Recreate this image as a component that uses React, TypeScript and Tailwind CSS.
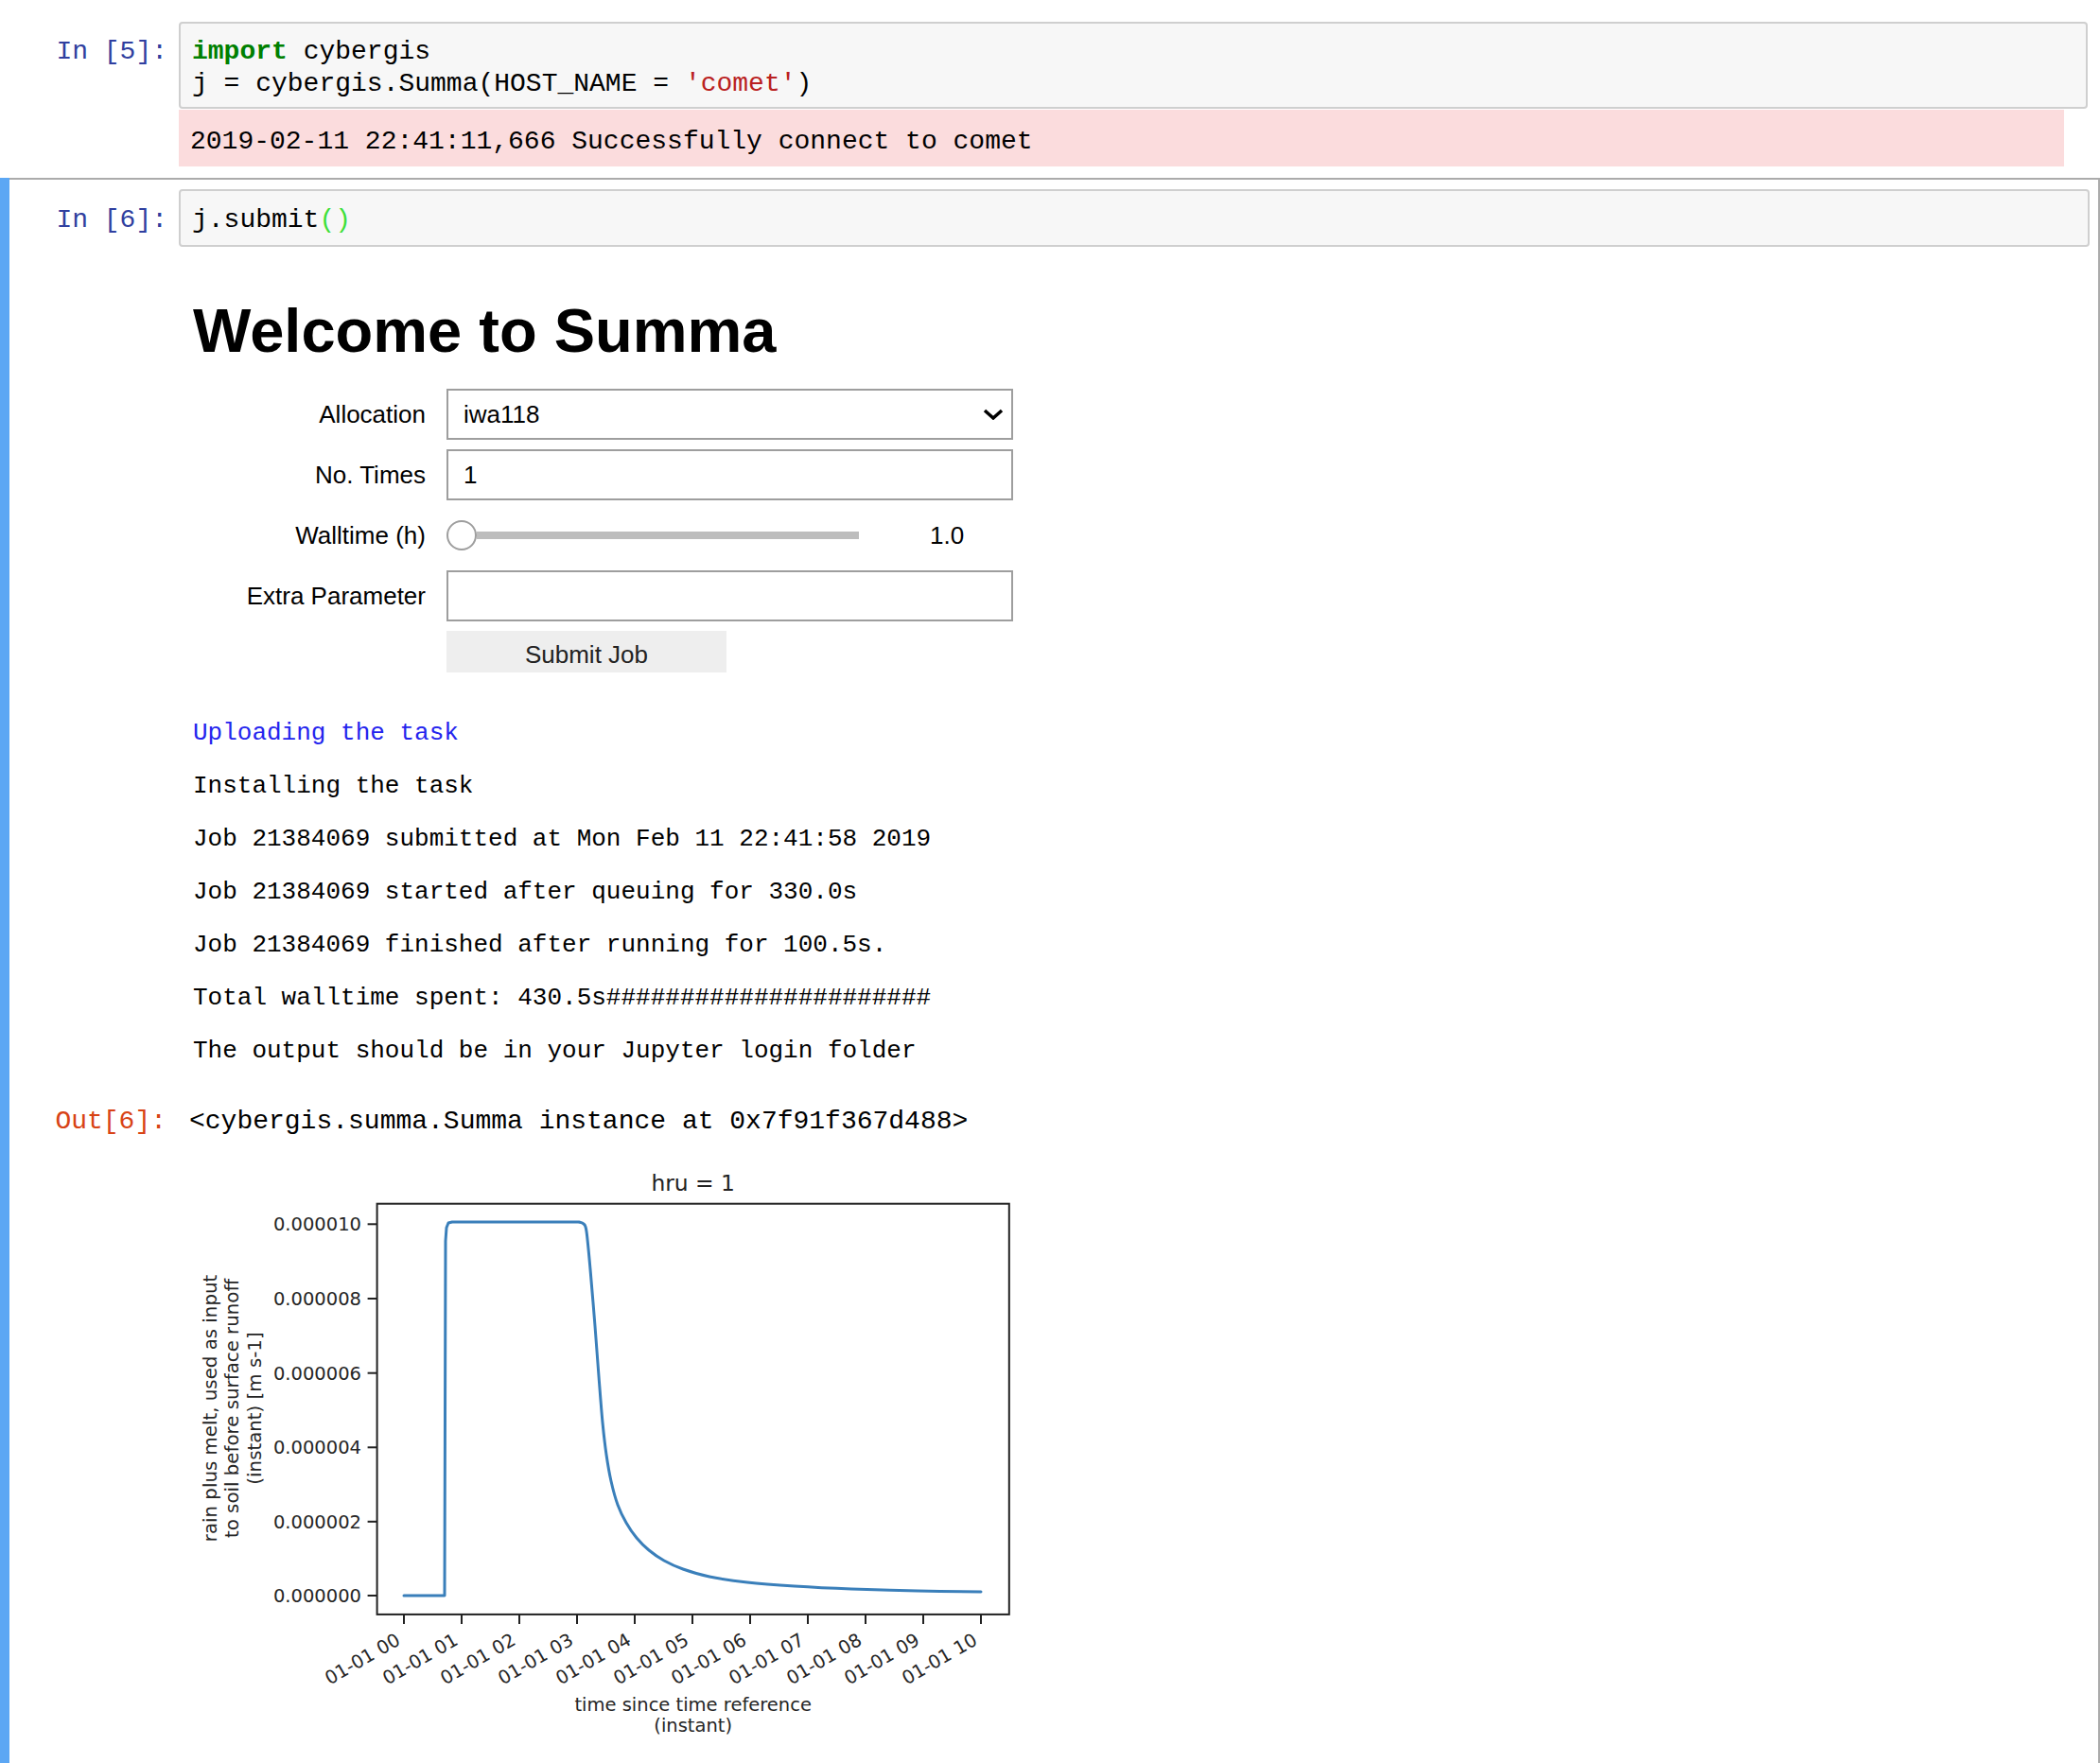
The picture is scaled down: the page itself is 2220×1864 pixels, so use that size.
const mono = "font-['Liberation_Mono',monospace]";
const sans = "font-['Liberation_Sans',Arial,sans-serif]";

const logLines = [
  { text: "Uploading the task", blue: true },
  { text: "Installing the task" },
  { text: "Job 21384069 submitted at Mon Feb 11 22:41:58 2019" },
  { text: "Job 21384069 started after queuing for 330.0s" },
  { text: "Job 21384069 finished after running for 100.5s." },
  { text: "Total walltime spent: 430.5s######################" },
  { text: "The output should be in your Jupyter login folder" },
];

// plot data, in svg-local pixels
const step: [number, number][] = [
  [227, 485], [270, 485], [271, 110], [272, 96], [274, 91], [278, 90], [412, 90],
];
const decay: [number, number][] = [
  [412, 90], [417, 92], [420, 100], [424, 140], [429, 200], [433, 253], [437, 302],
  [441, 336], [446, 364], [453, 389], [462, 408], [473, 424], [486, 437], [502, 448],
  [522, 457], [550, 465], [590, 471], [640, 475], [700, 478], [770, 480], [837, 481],
];

function smooth(pts: [number, number][]) {
  let d = "";
  for (let i = 0; i < pts.length - 1; i++) {
    const p0 = pts[Math.max(0, i - 1)];
    const p1 = pts[i];
    const p2 = pts[i + 1];
    const p3 = pts[Math.min(pts.length - 1, i + 2)];
    const c1x = p1[0] + (p2[0] - p0[0]) / 6;
    const c1y = p1[1] + (p2[1] - p0[1]) / 6;
    const c2x = p2[0] - (p3[0] - p1[0]) / 6;
    const c2y = p2[1] - (p3[1] - p1[1]) / 6;
    d += ` C${c1x} ${c1y} ${c2x} ${c2y} ${p2[0]} ${p2[1]}`;
  }
  return d;
}

const yTicks = [
  { y: 92.3, label: "0.000010" },
  { y: 171, label: "0.000008" },
  { y: 249.7, label: "0.000006" },
  { y: 328.3, label: "0.000004" },
  { y: 406.8, label: "0.000002" },
  { y: 485, label: "0.000000" },
];

const xTicks = Array.from({ length: 11 }, (_, i) => ({
  x: 227 + 61 * i,
  label: "01-01 " + String(i).padStart(2, "0"),
}));

function Chart() {
  const d =
    step.map(([x, y], i) => (i === 0 ? "M" : "L") + x + " " + y).join(" ") + smooth(decay);
  const font = { fontFamily: "'DejaVu Sans', sans-serif" };
  return (
    <svg width="900" height="660" viewBox="0 0 900 660" style={font}>
      <rect x="198.6" y="70.7" width="668.2" height="434.2" fill="white" stroke="#222" strokeWidth="2" />
      <path d={d} fill="none" stroke="#3a7fba" strokeWidth="3" strokeLinejoin="round" strokeLinecap="round" />
      {yTicks.map((t) => (
        <g key={t.label}>
          <line x1="188.6" x2="198.6" y1={t.y} y2={t.y} stroke="#222" strokeWidth="2" />
          <text x="182" y={t.y} dy="0.36em" textAnchor="end" fontSize="19.5" fill="#262626">
            {t.label}
          </text>
        </g>
      ))}
      {xTicks.map((t) => (
        <g key={t.label}>
          <line x1={t.x} x2={t.x} y1="504.9" y2="515" stroke="#222" strokeWidth="2" />
          <text
            transform={`translate(${t.x - 10} 523) rotate(-30)`}
            dy="0.76em"
            textAnchor="end"
            fontSize="19.5"
            fill="#262626"
          >
            {t.label}
          </text>
        </g>
      ))}
      <text x="532.7" y="57" textAnchor="middle" fontSize="23.4" fill="#222">
        hru = 1
      </text>
      <text x="532.7" y="607" textAnchor="middle" fontSize="19.5" fill="#262626">
        time since time reference
      </text>
      <text x="532.7" y="629" textAnchor="middle" fontSize="19.5" fill="#262626">
        (instant)
      </text>
      {[
        { x: 21.5, t: "rain plus melt, used as input" },
        { x: 45, t: "to soil before surface runoff" },
        { x: 68.5, t: "(instant) [m s-1]" },
      ].map((l) => (
        <text
          key={l.t}
          transform={`translate(${l.x + 7} 287) rotate(-90)`}
          textAnchor="middle"
          fontSize="19.8"
          fill="#262626"
        >
          {l.t}
        </text>
      ))}
    </svg>
  );
}

function FormRow({ label, children }: { label: string; children: React.ReactNode }) {
  return (
    <div className="flex h-[54px] items-center gap-[22px]">
      <div className="w-[246px] text-right text-[26px]">{label}</div>
      {children}
    </div>
  );
}

export default function App() {
  return (
    <div className={`flex min-h-[1864px] w-[2220px] flex-col overflow-hidden bg-white text-black ${mono}`}>
      {/* In [5] */}
      <div className="pb-[12px] pl-[10px] pr-[13px] pt-[23px]">
        <div className="flex">
          <div className="w-[179px] pr-[12px] pt-[15px] text-right text-[28px] leading-[34px] text-[#303F9F]">
            In [5]:
          </div>
          <div className="flex-1 whitespace-pre rounded-[4px] border-2 border-[#cfcfcf] bg-[#f7f7f7] pb-[7px] pl-[12px] pt-[13px] text-[28px] leading-[34px]">
            <div>
              <span className="font-bold text-[#008000]">import</span> cybergis
            </div>
            <div>
              j = cybergis.Summa(HOST_NAME = <span className="text-[#BA2121]">'comet'</span>)
            </div>
          </div>
        </div>
        <div className="mt-[1px] flex">
          <div className="w-[179px]" />
          <div className="mr-[25px] h-[60px] flex-1 whitespace-pre bg-[#fbdcdd] pl-[12px] pt-[4px] text-[28px] leading-[60px]">
            2019-02-11 22:41:11,666 Successfully connect to comet
          </div>
        </div>
      </div>

      {/* In [6] selected */}
      <div className="flex flex-1">
        <div className="w-[10px] bg-[#5ca7f4]" />
        <div className="flex-1 border-r-2 border-t-2 border-[#ababab] pr-[9px] pt-[10px]">
          <div className="flex">
            <div className="w-[179px] pr-[12px] pt-[16px] text-right text-[28px] leading-[33px] text-[#303F9F]">
              In [6]:
            </div>
            <div className="flex-1 whitespace-pre rounded-[4px] border-2 border-[#cfcfcf] bg-[#f7f7f7] pb-[10px] pl-[12px] pt-[14px] text-[28px] leading-[33px]">
              j.submit<span className="text-[#3fe03a]">()</span>
            </div>
          </div>

          <div className="flex">
            <div className="w-[179px]" />
            <div className="pl-[15px]">
              <h1 className={`mt-[57px] text-[65px] font-bold leading-[64px] ${sans}`}>Welcome to Summa</h1>

              <div className={`mt-[29px] flex flex-col gap-[10px] ${sans}`}>
                <FormRow label="Allocation">
                  <div className="flex h-[54px] w-[599px] items-center justify-between border-2 border-[#9e9e9e] pl-[16px] pr-[8px] text-[26px]">
                    <span>iwa118</span>
                    <svg width="22" height="12" viewBox="0 0 22 12">
                      <path d="M2 2 L11 10 L20 2" fill="none" stroke="#000" strokeWidth="3.5" />
                    </svg>
                  </div>
                </FormRow>
                <FormRow label="No. Times">
                  <div className="flex h-[54px] w-[599px] items-center border-2 border-[#9e9e9e] pl-[16px] text-[26px]">
                    1
                  </div>
                </FormRow>
                <FormRow label="Walltime (h)">
                  <div className="flex items-center">
                    <div className="h-[32px] w-[32px] rounded-full border-2 border-[#9e9e9e] bg-white" />
                    <div className="h-[8px] w-[404px] bg-[#bdbdbd]" />
                    <span className="ml-[75px] text-[26px]">1.0</span>
                  </div>
                </FormRow>
                <FormRow label="Extra Parameter">
                  <div className="h-[54px] w-[599px] border-2 border-[#9e9e9e]" />
                </FormRow>
                <div className="flex h-[44px] items-center gap-[22px]">
                  <div className="w-[246px]" />
                  <div className="flex h-[44px] w-[296px] items-center justify-center bg-[#eeeeee] pt-[6px] text-[26px] text-[#222]">
                    Submit Job
                  </div>
                </div>
              </div>

              <div className="mt-[36px]">
                {logLines.map((l) => (
                  <div
                    key={l.text}
                    className={`whitespace-pre text-[26px] leading-[56px] ${l.blue ? "text-[#2424ee]" : ""}`}
                  >
                    {l.text}
                  </div>
                ))}
              </div>
            </div>
          </div>

          <div className="mt-[30px] flex">
            <div className="w-[179px] pr-[13px] text-right text-[28px] leading-[33px] text-[#D84315]">Out[6]:</div>
            <div className="whitespace-pre pl-[11px] text-[28px] leading-[33px]">
              {"<cybergis.summa.Summa instance at 0x7f91f367d488>"}
            </div>
          </div>

          <div className="flex">
            <div className="w-[179px]" />
            <div className="pl-[11px]">
              <Chart />
            </div>
          </div>
        </div>
      </div>
    </div>
  );
}
